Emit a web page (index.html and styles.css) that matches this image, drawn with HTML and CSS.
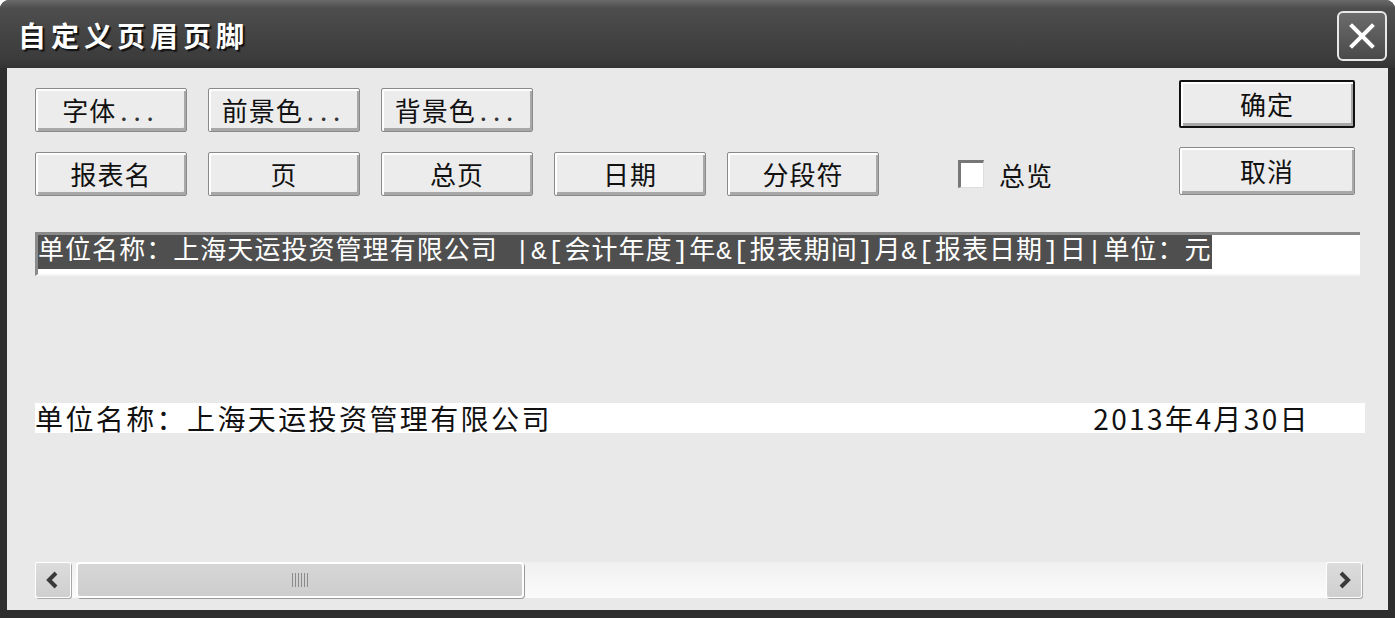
FILE: index.html
```html
<!DOCTYPE html>
<html>
<head>
<meta charset="UTF-8">
<title>自定义页眉页脚</title>
<link rel="stylesheet" href="styles.css">
</head>
<body>
<div class="window">
    <div class="titlebar">
        <span class="title">自定义页眉页脚</span>
        <span class="close">
            <svg width="30" height="30" viewBox="0 0 30 30"><path d="M5 5 L25 25 M25 5 L5 25" stroke="#fff" stroke-width="4" stroke-linecap="square"/></svg>
        </span>
    </div>
    <div class="client">
        <div class="top">
            <div class="rows">
                <div class="row">
                    <button class="btn">字体<span class="dots">...</span></button>
                    <button class="btn">前景色<span class="dots">...</span></button>
                    <button class="btn">背景色<span class="dots">...</span></button>
                </div>
                <div class="row">
                    <button class="btn">报表名</button>
                    <button class="btn">页</button>
                    <button class="btn">总页</button>
                    <button class="btn">日期</button>
                    <button class="btn">分段符</button>
                    <label class="check"><span class="box"></span>总览</label>
                </div>
            </div>
            <div class="side">
                <button class="btn big default">确定</button>
                <button class="btn big">取消</button>
            </div>
        </div>
        <div class="field"><span class="sel">单位名称：上海天运投资管理有限公司 |&amp;[会计年度]年&amp;[报表期间]月&amp;[报表日期]日|单位：元</span></div>
        <div class="preview">
            <span>单位名称：上海天运投资管理有限公司</span>
            <span>2013年4月30日</span>
        </div>
        <div class="scrollbar">
            <span class="arrow">
                <svg width="16" height="18" viewBox="0 0 16 18"><path d="M11 2 L4 9 L11 16" fill="none" stroke="#3a3a3a" stroke-width="4"/></svg>
            </span>
            <span class="thumb"><span class="grip"></span></span>
            <span class="track"></span>
            <span class="arrow">
                <svg width="16" height="18" viewBox="0 0 16 18"><path d="M5 2 L12 9 L5 16" fill="none" stroke="#3a3a3a" stroke-width="4"/></svg>
            </span>
        </div>
    </div>
</div>
</body>
</html>
```
FILE: styles.css
```css
body {
    margin: 0;
    background: #fff;
    font-family: "Noto Sans CJK SC", "Liberation Sans", sans-serif;
}

.window {
    width: 1395px;
    height: 618px;
    display: flex;
    flex-direction: column;
    background: #2e2e2e;
    border-radius: 9px 9px 0 0;
    overflow: hidden;
}

.titlebar {
    height: 68px;
    flex: none;
    display: flex;
    align-items: center;
    justify-content: space-between;
    padding: 0 8px 0 18px;
    background: linear-gradient(#6a6a6a 0, #4e4e4e 12%, #444 50%, #3c3c3c 85%, #333 100%);
}

.title {
    color: #fff;
    font-size: 28px;
    font-weight: bold;
    letter-spacing: 5px;
    text-shadow: 2px 2px 1px #111;
    margin-top: 2px;
}

.close {
    width: 46px;
    height: 46px;
    display: flex;
    align-items: center;
    justify-content: center;
    border: 2px solid #e8e8e8;
    border-radius: 6px;
    background: linear-gradient(#6c6c6c, #4a4a4a);
    margin-top: 4px;
}

.client {
    flex: 1;
    margin: 0 7px 8px 7px;
    background: #e9e9e9;
    padding: 20px 23px 0 28px;
    display: flex;
    flex-direction: column;
}

.top {
    display: flex;
    justify-content: space-between;
}

.rows {
    display: flex;
    flex-direction: column;
    gap: 20px;
}

.row {
    display: flex;
    align-items: center;
    gap: 21px;
}

.btn {
    width: 152px;
    height: 44px;
    padding: 0;
    background: #ececec;
    border: 1px solid #8a8a8a;
    border-radius: 2px;
    box-shadow: inset 2px 2px 0 #fff, inset -2px -3px 0 #a8a8a8;
    font-family: "Noto Sans CJK SC", sans-serif;
    font-size: 26px;
    letter-spacing: 1px;
    color: #111;
    line-height: 1;
}

.dots {
    letter-spacing: 6px;
    color: #333;
    margin-left: 4px;
}

.check {
    display: flex;
    align-items: center;
    gap: 15px;
    margin-left: 58px;
    font-size: 26px;
    letter-spacing: 1px;
    color: #111;
}

.box {
    width: 22px;
    height: 24px;
    background: #fff;
    border-top: 3px solid #777;
    border-left: 3px solid #777;
    border-right: 1px solid #ddd;
    border-bottom: 1px solid #ddd;
}

.side {
    display: flex;
    flex-direction: column;
    gap: 19px;
    margin-top: -8px;
    margin-right: 10px;
}

.big {
    width: 176px;
    height: 48px;
}

.default {
    border: 2px solid #111;
}

.field {
    margin-top: 36px;
    margin-right: 5px;
    height: 44px;
    background: #fff;
    border-top: 3px solid #8a8a8a;
    border-left: 3px solid #8a8a8a;
    border-bottom: 2px solid #f4f4f4;
    box-sizing: border-box;
}

.sel {
    display: inline-block;
    background: #4f4f4f;
    color: #fff;
    font-family: "Liberation Mono", "Noto Sans CJK SC", monospace;
    font-size: 26px;
    line-height: 34px;
    height: 34px;
    white-space: nowrap;
    letter-spacing: 1.05px;
}

.preview {
    margin-top: 127px;
    height: 30px;
    background: #fff;
    display: flex;
    justify-content: space-between;
    align-items: center;
    padding-right: 55px;
    font-size: 28px;
    color: #111;
    letter-spacing: 2.4px;
}

.scrollbar {
    margin-top: 129px;
    margin-right: 3px;
    height: 36px;
    display: flex;
    gap: 5px;
    background: linear-gradient(#f0f0f0, #fbfbfb);
}

.arrow {
    width: 34px;
    height: 34px;
    flex: none;
    display: flex;
    align-items: center;
    justify-content: center;
    background: linear-gradient(#dcdcdc, #cfcfcf);
    border: 1px solid #fff;
    border-radius: 3px;
    box-shadow: 1px 1px 0 #a8a8a8;
}

.thumb {
    width: 444px;
    height: 32px;
    flex: none;
    display: flex;
    align-items: center;
    justify-content: center;
    background: linear-gradient(#d6d6d6, #cdcdcd);
    border: 2px solid #fff;
    border-radius: 4px;
    box-shadow: 1px 1px 0 #9a9a9a;
}

.grip {
    width: 16px;
    height: 14px;
    background: repeating-linear-gradient(90deg, #8a8a8a 0 1px, transparent 1px 3px);
}

.track {
    flex: 1;
}
```
